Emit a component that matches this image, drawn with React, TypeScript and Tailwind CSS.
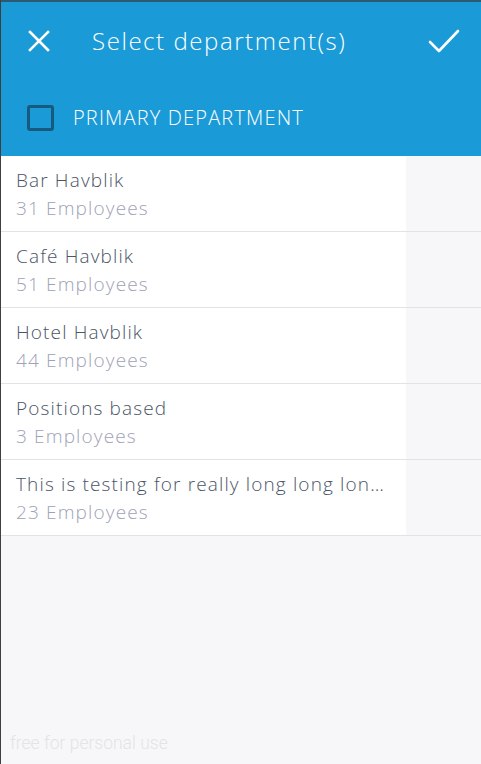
import React from 'react';

const departments = [
  { name: 'Bar Havblik', count: 31 },
  { name: 'Café Havblik', count: 51 },
  { name: 'Hotel Havblik', count: 44 },
  { name: 'Positions based', count: 3 },
  { name: 'This is testing for really long long lon…', count: 23 },
];

export default function App() {
  return (
    <div
      className="relative h-[764px] w-[481px] overflow-hidden border-l border-[#3f3f3f] bg-[#f7f7f9]"
      style={{ fontFamily: '"Open Sans", Lato, sans-serif' }}
    >
      {/* Header */}
      <div className="h-[156px] border-t-2 border-[#2b5a74] bg-[#1a9bd7] text-white">
        <div className="flex h-[78px] items-center">
          <button className="ml-[27px] flex h-[22px] w-[22px] items-center justify-center">
            <svg width="22" height="22" viewBox="0 0 22 22" fill="none" stroke="white" strokeWidth="2.6" strokeLinecap="square">
              <path d="M2 2 L20 20 M20 2 L2 20" />
            </svg>
          </button>
          <div className="ml-[42px] flex-1 text-[24px] font-light leading-none tracking-[0.065em]">Select department(s)</div>
          <button className="mr-[21px] flex items-center justify-center">
            <svg width="32" height="26" viewBox="0 0 32 26" fill="none" stroke="white" strokeWidth="2.6" strokeLinecap="round" strokeLinejoin="round">
              <path d="M2 14 L11 23 L30 3" />
            </svg>
          </button>
        </div>
        <div className="flex h-[76px] items-center">
          <div className="ml-[26px] h-[26px] w-[27px] rounded-[3px] border-[3px] border-[#175a80]" />
          <div className="ml-[19px] text-[20px] font-light leading-none tracking-[0.058em]">PRIMARY DEPARTMENT</div>
        </div>
      </div>

      {/* List */}
      <div>
        {departments.map((d) => (
          <div key={d.name} className="flex h-[76px] border-b border-[#e2e3e7]">
            <div className="flex w-[405px] flex-col justify-center bg-white pl-[15px] pr-[16px]">
              <div className="whitespace-nowrap text-[19px] font-light leading-[28px] tracking-[0.06em] text-[#4a5565]">{d.name}</div>
              <div className="text-[19px] font-light leading-[28px] tracking-[0.06em] text-[#9ea2b6]">{d.count} Employees</div>
            </div>
          </div>
        ))}
      </div>

      <div
        className="absolute bottom-[8px] left-[9px] text-[17.5px] font-light text-[#e3e3e6]"
        style={{ fontFamily: 'Roboto, sans-serif' }}
      >
        free for personal use
      </div>
    </div>
  );
}
